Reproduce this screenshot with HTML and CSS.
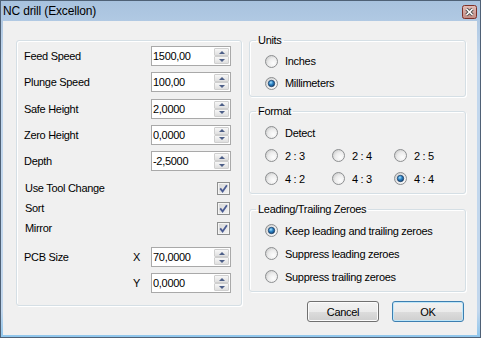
FILE: index.html
```html
<!DOCTYPE html>
<html lang="en">
<head>
    <meta charset="UTF-8">
    <title>NC drill (Excellon)</title>
    <link rel="stylesheet" href="styles.css">
</head>
<body>

    <svg class="defs" width="0" height="0">
        <defs>
            <radialGradient id="rfill" cx="0.65" cy="0.65" r="0.75">
                <stop offset="0" stop-color="#fdfdfd"/>
                <stop offset="0.55" stop-color="#ececec"/>
                <stop offset="1" stop-color="#c9c9c9"/>
            </radialGradient>
            <radialGradient id="dot" cx="0.4" cy="0.35" r="0.7">
                <stop offset="0" stop-color="#a8e2ff"/>
                <stop offset="0.45" stop-color="#2f86c8"/>
                <stop offset="1" stop-color="#0c3f72"/>
            </radialGradient>
            <linearGradient id="cfill" x1="0" y1="0" x2="1" y2="1">
                <stop offset="0" stop-color="#d4d4d4"/>
                <stop offset="1" stop-color="#f6f6f6"/>
            </linearGradient>
            <linearGradient id="xfill" x1="0" y1="0" x2="0" y2="1">
                <stop offset="0" stop-color="#e3beb9"/>
                <stop offset="1" stop-color="#c08b84"/>
            </linearGradient>
            <symbol id="radio-off" viewBox="0 0 13 13">
                <circle cx="6.5" cy="6.5" r="6" fill="url(#rfill)" stroke="#8d8f91"/>
            </symbol>
            <symbol id="radio-on" viewBox="0 0 13 13">
                <circle cx="6.5" cy="6.5" r="6" fill="url(#rfill)" stroke="#8d8f91"/>
                <circle cx="6.5" cy="6.5" r="3.2" fill="url(#dot)" stroke="#1d3d63" stroke-width="0.8"/>
            </symbol>
            <symbol id="check" viewBox="0 0 13 13">
                <rect x="0.5" y="0.5" width="12" height="12" fill="url(#cfill)" stroke="#8e8f8f"/>
                <rect x="1.5" y="1.5" width="10" height="10" fill="none" stroke="#f4f4f4"/>
                <path d="M3.2 6.4 L5.6 9.4 L9.9 3.2" fill="none" stroke="#4a5b92" stroke-width="1.8"/>
            </symbol>
        </defs>
    </svg>

    <div class="window">
        <div class="titlebar">
            <span class="title">NC drill (Excellon)</span>
            <svg class="close" width="15" height="14" viewBox="0 0 15 14">
                <rect x="0.5" y="0.5" width="14" height="13" rx="2" fill="url(#xfill)" stroke="#7e3129"/>
                <path d="M4.5 4 L10.5 10 M10.5 4 L4.5 10" stroke="#4a4a4a" stroke-width="3.2"/>
                <path d="M4.5 4 L10.5 10 M10.5 4 L4.5 10" stroke="#ffffff" stroke-width="1.6"/>
            </svg>
        </div>

        <div class="client">
            <div class="left-group">
                <div class="fields">
                    <div class="row">
                        <label class="lbl">Feed Speed</label>
                        <div class="spin"><input class="num" value="1500,00"><div class="arrows"><span class="up"></span><span class="down"></span></div></div>
                    </div>
                    <div class="row">
                        <label class="lbl">Plunge Speed</label>
                        <div class="spin"><input class="num" value="100,00"><div class="arrows"><span class="up"></span><span class="down"></span></div></div>
                    </div>
                    <div class="row">
                        <label class="lbl">Safe Height</label>
                        <div class="spin"><input class="num" value="2,0000"><div class="arrows"><span class="up"></span><span class="down"></span></div></div>
                    </div>
                    <div class="row">
                        <label class="lbl">Zero Height</label>
                        <div class="spin"><input class="num" value="0,0000"><div class="arrows"><span class="up"></span><span class="down"></span></div></div>
                    </div>
                    <div class="row">
                        <label class="lbl">Depth</label>
                        <div class="spin"><input class="num" value="-2,5000"><div class="arrows"><span class="up"></span><span class="down"></span></div></div>
                    </div>
                </div>

                <div class="checks">
                    <div class="check-row"><span>Use Tool Change</span><svg class="box" width="13" height="13"><use href="#check"/></svg></div>
                    <div class="check-row"><span>Sort</span><svg class="box" width="13" height="13"><use href="#check"/></svg></div>
                    <div class="check-row"><span>Mirror</span><svg class="box" width="13" height="13"><use href="#check"/></svg></div>
                </div>

                <div class="pcb">
                    <span class="pcb-lbl">PCB Size</span>
                    <span class="axis">X</span>
                    <div class="spin"><input class="num" value="70,0000"><div class="arrows"><span class="up"></span><span class="down"></span></div></div>
                    <span></span>
                    <span class="axis">Y</span>
                    <div class="spin"><input class="num" value="0,0000"><div class="arrows"><span class="up"></span><span class="down"></span></div></div>
                </div>
            </div>

            <div class="right-col">
                <fieldset class="group units">
                    <legend>Units</legend>
                    <div class="opts">
                        <div class="opt"><svg width="13" height="13"><use href="#radio-off"/></svg>Inches</div>
                        <div class="opt"><svg width="13" height="13"><use href="#radio-on"/></svg>Millimeters</div>
                    </div>
                </fieldset>

                <fieldset class="group format">
                    <legend>Format</legend>
                    <div class="opts grid">
                        <div class="opt wide"><svg width="13" height="13"><use href="#radio-off"/></svg>Detect</div>
                        <div class="opt"><svg width="13" height="13"><use href="#radio-off"/></svg>2 : 3</div>
                        <div class="opt"><svg width="13" height="13"><use href="#radio-off"/></svg>2 : 4</div>
                        <div class="opt"><svg width="13" height="13"><use href="#radio-off"/></svg>2 : 5</div>
                        <div class="opt"><svg width="13" height="13"><use href="#radio-off"/></svg>4 : 2</div>
                        <div class="opt"><svg width="13" height="13"><use href="#radio-off"/></svg>4 : 3</div>
                        <div class="opt"><svg width="13" height="13"><use href="#radio-on"/></svg>4 : 4</div>
                    </div>
                </fieldset>

                <fieldset class="group zeroes">
                    <legend>Leading/Trailing Zeroes</legend>
                    <div class="opts">
                        <div class="opt"><svg width="13" height="13"><use href="#radio-on"/></svg>Keep leading and trailing zeroes</div>
                        <div class="opt"><svg width="13" height="13"><use href="#radio-off"/></svg>Suppress leading zeroes</div>
                        <div class="opt"><svg width="13" height="13"><use href="#radio-off"/></svg>Suppress trailing zeroes</div>
                    </div>
                </fieldset>

                <div class="buttons">
                    <button class="btn">Cancel</button>
                    <button class="btn default">OK</button>
                </div>
            </div>
        </div>
    </div>

</body>
</html>
```

FILE: styles.css
```css
body {
    margin: 0;
    font-family: "Liberation Sans", Arial, sans-serif;
    font-size: 11px;
    letter-spacing: -0.3px;
    color: #000;
}
.defs {
    position: absolute;
}
.window {
    width: 481px;
    height: 338px;
    box-sizing: border-box;
    border: 1px solid #4f6176;
    background: linear-gradient(#a8c2de, #c2d7ed 60px, #c2d7ed 310px, #8fc6ec);
    display: flex;
    flex-direction: column;
}
.titlebar {
    height: 20px;
    display: flex;
    justify-content: space-between;
    align-items: flex-start;
    padding: 0 3px 0 2px;
}
.title {
    font-size: 12px;
    letter-spacing: -0.15px;
    line-height: 20px;
}
.close {
    margin-top: 4px;
}
.client {
    flex: 1;
    margin: 0 3px 2px 2px;
    background: #f0f0f0;
    display: flex;
    align-items: flex-start;
    gap: 7px;
    padding: 12px 0 0 13px;
}
.left-group {
    margin-top: 7px;
    width: 226px;
    height: 266px;
    box-sizing: border-box;
    border: 1px solid #d5dfe5;
    border-radius: 3px;
    box-shadow: inset 1px 1px 0 #fff, 1px 1px 0 #fff;
    padding: 5px 10px 0 7px;
}
.fields {
    display: flex;
    flex-direction: column;
    gap: 6.25px;
}
.row {
    height: 20px;
    display: flex;
    align-items: center;
}
.lbl {
    width: 127px;
}
.spin {
    width: 80px;
    height: 20px;
    box-sizing: border-box;
    border: 1px solid #a9a9a9;
    background: #fff;
    display: flex;
}
.num {
    flex: 1;
    min-width: 0;
    border: 0;
    padding: 0 0 0 1px;
    margin: 0;
    font: inherit;
    letter-spacing: inherit;
    color: #000;
    background: transparent;
    outline: none;
}
.arrows {
    width: 15px;
    display: flex;
    flex-direction: column;
    padding: 1px 1px 1px 0;
}
.arrows span {
    flex: 1;
    border: 1px solid #cfcfcf;
    border-radius: 1px;
    background: linear-gradient(#f7f7f7, #dfdfdf);
    display: flex;
    align-items: center;
    justify-content: center;
}
.up::after {
    content: "";
    border-left: 3px solid transparent;
    border-right: 3px solid transparent;
    border-bottom: 3px solid #4d5f88;
}
.down::after {
    content: "";
    border-left: 3px solid transparent;
    border-right: 3px solid transparent;
    border-top: 3px solid #4d5f88;
}
.checks {
    margin-top: 7px;
    padding-left: 1px;
}
.check-row {
    height: 20px;
    display: flex;
    align-items: center;
    justify-content: space-between;
    padding-right: 1px;
}
.box {
    display: block;
}
.pcb {
    margin-top: 9px;
    display: grid;
    grid-template-columns: 109px 18px 80px;
    grid-template-rows: 20px 20px;
    row-gap: 6px;
    align-items: center;
}
.right-col {
    width: 217px;
    display: flex;
    flex-direction: column;
}
.group {
    margin: 0;
    padding: 3px 0 2px 0;
    border: 1px solid #d5dfe5;
    border-radius: 3px;
    box-shadow: inset 1px 1px 0 #fff, 1px 1px 0 #fff;
    min-inline-size: 0;
}
.group legend {
    margin-left: 6px;
    padding: 0 2px;
    line-height: 14px;
}
.format {
    margin-top: 7px;
    padding-bottom: 3px;
}
.zeroes {
    margin-top: 8px;
    padding-bottom: 3px;
}
.opts {
    padding-left: 15px;
}
.opt {
    height: 22px;
    display: flex;
    align-items: center;
    gap: 7px;
}
.format .opt,
.zeroes .opt {
    height: 23px;
}
.grid {
    display: grid;
    grid-template-columns: 67px 62px 1fr;
}
.wide {
    grid-column: 1 / 4;
}
.buttons {
    margin-top: 9px;
    display: flex;
    justify-content: flex-end;
    gap: 13px;
    padding-right: 2px;
}
.btn {
    width: 72px;
    height: 21px;
    box-sizing: border-box;
    padding: 0;
    border: 1px solid #707070;
    border-radius: 3px;
    background: linear-gradient(#f2f2f2 0, #ebebeb 50%, #dddddd 50%, #cfcfcf 100%);
    box-shadow: inset 0 0 0 1px #fbfbfb;
    font: inherit;
    letter-spacing: inherit;
    color: #000;
}
.btn.default {
    border-color: #3c7fb1;
    box-shadow: inset 0 0 0 1px #bfe6f8;
}
```
